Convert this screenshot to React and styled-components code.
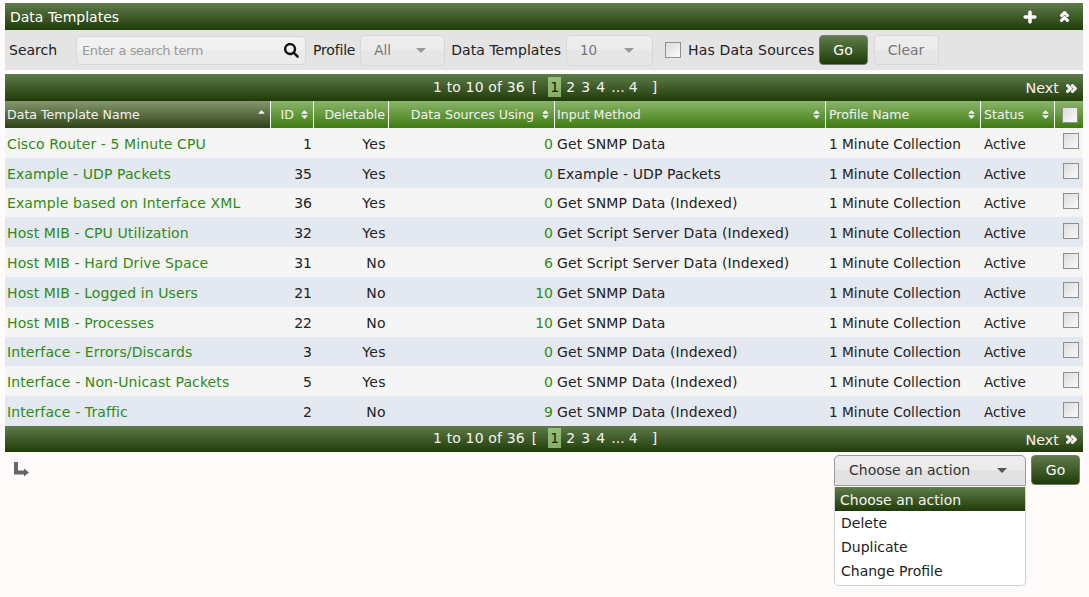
import React from 'react'
import styled, { createGlobalStyle } from 'styled-components'
import { FaPlus, FaAngleDoubleUp, FaAngleDoubleRight, FaSearch, FaSort, FaSortUp } from 'react-icons/fa'

const GlobalStyle = createGlobalStyle`
  html, body { margin: 0; padding: 0; background: #fffbfa; }
  body { font-family: "DejaVu Sans", Verdana, sans-serif; font-size: 13px; color: #222; }
  * { box-sizing: border-box; }
`

const barGradient = 'linear-gradient(to bottom, #5f7b4b 0%, #1f3c08 100%)'
const COLUMNS = '266px 43px 75px 166px 271px 155px 74px 28px'

const Page = styled.div`
  width: 1089px;
  height: 597px;
  padding: 3px 6px 0 5px;
  overflow: hidden;
`

const TitleBar = styled.div`
  display: flex;
  align-items: center;
  height: 27px;
  padding: 0 12px 0 5px;
  background: ${barGradient};
  color: #fff;
  font-size: 14px;
`

const Title = styled.div`
  flex: 1;
`

const TitleIcons = styled.div`
  display: flex;
  gap: 21px;
  align-items: center;
  font-size: 14px;
`

const BoldUp = styled(FaAngleDoubleUp)`
  stroke-width: 40px;
  font-size: 13px;
`

const BoldPlus = styled(FaPlus)`
  stroke-width: 30px;
`

const FilterBar = styled.div`
  display: flex;
  align-items: center;
  height: 40px;
  padding-left: 4px;
  background: #e4e4e4;
  font-size: 14px;
  margin-bottom: 4px;
  color: #222;
`

const FilterLabel = styled.span`
  margin-left: ${p => p.$left || 0}px;
  margin-right: ${p => p.$right || 0}px;
  letter-spacing: ${p => p.$spacing || 0}px;
  white-space: nowrap;
`

const SearchBox = styled.div`
  display: flex;
  align-items: center;
  justify-content: space-between;
  width: 230px;
  height: 29px;
  padding: 0 6px 0 5px;
  border: 1px solid #d8d8d8;
  border-radius: 5px;
  background: linear-gradient(to bottom, #f1f1f1 0%, #f1f1f1 50%, #ebebeb 50%, #ebebeb 100%);
  color: #9a9a9a;
  font-size: 13px;
  letter-spacing: -0.45px;
`

const SelectBox = styled.div`
  display: flex;
  align-items: center;
  flex: none;
  width: ${p => p.$width}px;
  height: 31px;
  margin-left: 5px;
  padding-left: 13px;
  border: 1px solid #d8d8d8;
  border-radius: 5px;
  background: linear-gradient(to bottom, #ececec 0%, #ececec 50%, #e6e6e6 50%, #e6e6e6 100%);
  color: #777;
  font-size: 13.5px;
`

const Caret = styled.span`
  width: 0;
  height: 0;
  margin-left: auto;
  margin-right: ${p => p.$right || 18}px;
  border-left: 5px solid transparent;
  border-right: 5px solid transparent;
  border-top: 5px solid ${p => p.$color || '#999'};
`

const Check = styled.span`
  display: block;
  flex: none;
  width: 16px;
  height: 16px;
  margin-left: ${p => p.$left || 0}px;
  border: 1px solid #8f8f8f;
  background: linear-gradient(135deg, #dcdcdc 0%, #fafafa 100%);
`

const GoButton = styled.div`
  display: flex;
  align-items: center;
  justify-content: center;
  flex: none;
  width: ${p => p.$width || 49}px;
  height: 30px;
  margin-left: ${p => p.$left || 0}px;
  border: 1px solid #777;
  border-radius: 4px;
  background: ${barGradient};
  color: #fff;
  font-size: 14px;
`

const ClearButton = styled.div`
  display: flex;
  align-items: center;
  justify-content: center;
  flex: none;
  width: 65px;
  height: 30px;
  margin-left: 6px;
  border: 1px solid #d8d8d8;
  border-radius: 4px;
  background: linear-gradient(to bottom, #ececec 0%, #ececec 50%, #e6e6e6 50%, #e6e6e6 100%);
  color: #777;
  font-size: 14px;
`

const NavBar = styled.div`
  position: relative;
  display: flex;
  align-items: center;
  height: ${p => p.$height}px;
  padding: 0 0 2px 428px;
  background: ${barGradient};
  color: #f4f4f4;
  font-size: 14px;
`

const NavInfo = styled.div`
  display: flex;
  align-items: center;
  white-space: pre;
`

const NavCount = styled.span`
  letter-spacing: 0.15px;
  margin-right: 7px;
`

const NavBracket = styled.span`
  margin-left: ${p => p.$left || 0}px;
  margin-right: ${p => p.$right || 0}px;
`

const PageNum = styled.span`
  display: inline-block;
  width: ${p => (p.$active ? 13 : 9)}px;
  height: 20px;
  margin-right: ${p => (p.$active ? 5 : 6)}px;
  line-height: 20px;
  text-align: center;
  background: ${p => (p.$active ? 'linear-gradient(to bottom, #96c07a, #85ad68)' : 'none')};
  color: ${p => (p.$active ? '#14240a' : '#f4f4f4')};
`

const NextLink = styled.span`
  position: absolute;
  right: 5px;
  bottom: ${p => p.$bottom}px;
  display: flex;
  align-items: center;
  gap: 6px;
  font-size: 14.4px;
`

const BoldRight = styled(FaAngleDoubleRight)`
  stroke-width: 40px;
  font-size: 13px;
`

const GridRow = styled.div`
  display: grid;
  grid-template-columns: ${COLUMNS};
  align-items: center;
  height: ${p => p.$height}px;
`

const HeadCell = styled.div`
  position: relative;
  display: flex;
  align-items: center;
  justify-content: ${p => (p.$pad !== undefined ? 'flex-end' : 'flex-start')};
  height: 27px;
  padding: 0 ${p => (p.$pad !== undefined ? p.$pad : 2)}px 0 ${p => p.$leftPad || 2}px;
  border-right: 1px solid #f5f5f5;
  background: ${p => (p.$sorted
    ? 'linear-gradient(to bottom, #85996e 0%, #2f4117 100%)'
    : 'linear-gradient(to bottom, #8ab56a 0%, #3f7b12 100%)')};
  color: #f2f2f2;
  font-size: 12.6px;
  white-space: nowrap;
  &:last-child { border-right: 0; padding: 0 0 0 7px; }
`

const SortMark = styled.span`
  position: absolute;
  right: 3px;
  top: 8px;
  display: flex;
  font-size: 11px;
  color: #f2f2f2;
`

const BodyRow = styled(GridRow)`
  background: ${p => (p.$odd ? '#e4e8f1' : '#f5f5f5')};
`

const Cell = styled.div`
  padding: 1.9px ${p => (p.$right ? p.$pad || 2 : 0)}px 0 ${p => p.$left || 2}px;
  text-align: ${p => (p.$right ? 'right' : 'left')};
  color: ${p => p.$color || '#222'};
  font-size: ${p => p.$size || 14}px;
  letter-spacing: ${p => p.$spacing || 0}px;
  white-space: nowrap;
`

const CheckCell = styled.div`
  display: flex;
  padding-left: 8px;
  margin-top: -3px;
`

const ActionArea = styled.div`
  position: relative;
  display: flex;
  align-items: flex-start;
  padding: 3px 3px 0 9px;
`

const ReturnArrow = styled.svg`
  margin-top: 7px;
  margin-right: auto;
`

const ActionSelect = styled.div`
  display: flex;
  align-items: center;
  width: 192px;
  height: 31px;
  padding-left: 14px;
  border: 1px solid #9b9b9b;
  border-radius: 5px 5px 0 0;
  background: linear-gradient(to bottom, #ececec 0%, #ececec 50%, #e2e2e2 50%, #e2e2e2 100%);
  color: #333;
  font-size: 14px;
`

const ActionMenu = styled.div`
  position: absolute;
  top: 35px;
  right: 57px;
  width: 192px;
  padding: 0 0 2px;
  border: 1px solid #d0d0d0;
  border-top: 0;
  border-radius: 0 0 5px 5px;
  background: #fff;
  color: #222;
  font-size: 14px;
`

const MenuItem = styled.div`
  height: 24px;
  line-height: 24px;
  padding-left: 6px;
  white-space: nowrap;
  ${p => p.$active && `
    padding-left: 5px;
    padding-top: 1px;
    background: ${barGradient};
    color: #f4f4f4;
  `}
`

const columns = [
  { label: 'Data Template Name', sorted: true },
  { label: 'ID', pad: 19 },
  { label: 'Deletable', pad: 3, plain: true },
  { label: 'Data Sources Using', pad: 20 },
  { label: 'Input Method' },
  { label: 'Profile Name', leftPad: 3 },
  { label: 'Status', leftPad: 3 },
]

const rows = [
  ['Cisco Router - 5 Minute CPU', 1, 'Yes', 0, 'Get SNMP Data'],
  ['Example - UDP Packets', 35, 'Yes', 0, 'Example - UDP Packets'],
  ['Example based on Interface XML', 36, 'Yes', 0, 'Get SNMP Data (Indexed)'],
  ['Host MIB - CPU Utilization', 32, 'Yes', 0, 'Get Script Server Data (Indexed)'],
  ['Host MIB - Hard Drive Space', 31, 'No', 6, 'Get Script Server Data (Indexed)'],
  ['Host MIB - Logged in Users', 21, 'No', 10, 'Get SNMP Data'],
  ['Host MIB - Processes', 22, 'No', 10, 'Get SNMP Data'],
  ['Interface - Errors/Discards', 3, 'Yes', 0, 'Get SNMP Data (Indexed)'],
  ['Interface - Non-Unicast Packets', 5, 'Yes', 0, 'Get SNMP Data (Indexed)'],
  ['Interface - Traffic', 2, 'No', 9, 'Get SNMP Data (Indexed)'],
]

const Nav = ({ height, nextBottom }) => (
  <NavBar $height={height}>
    <NavInfo>
      <NavCount>1 to 10 of 36</NavCount>
      <NavBracket $right={11}>[</NavBracket>
      <PageNum $active>1</PageNum>
      <PageNum>2</PageNum>
      <PageNum>3</PageNum>
      <PageNum>4</PageNum>
      <NavBracket $right={4}>...</NavBracket>
      <PageNum>4</PageNum>
      <NavBracket $left={8}>]</NavBracket>
    </NavInfo>
    <NextLink $bottom={nextBottom}>Next <BoldRight /></NextLink>
  </NavBar>
)

const App = () => (
  <Page>
    <GlobalStyle />
    <TitleBar>
      <Title>Data Templates</Title>
      <TitleIcons><BoldPlus /><BoldUp /></TitleIcons>
    </TitleBar>
    <FilterBar>
      <FilterLabel $right={19}>Search</FilterLabel>
      <SearchBox>Enter a search term <FaSearch color="#111" size={15} /></SearchBox>
      <FilterLabel $left={7} $spacing={-0.2}>Profile</FilterLabel>
      <SelectBox $width={85}>All<Caret /></SelectBox>
      <FilterLabel $left={6} $spacing={0.05}>Data Templates</FilterLabel>
      <SelectBox $width={87}>10<Caret /></SelectBox>
      <Check $left={12} />
      <FilterLabel $left={7} $right={4} $spacing={0.15}>Has Data Sources</FilterLabel>
      <GoButton>Go</GoButton>
      <ClearButton>Clear</ClearButton>
    </FilterBar>
    <Nav height={27} nextBottom={5} />
    <GridRow $height={27}>
      {columns.map(c => (
        <HeadCell key={c.label} $sorted={c.sorted} $pad={c.pad} $leftPad={c.leftPad}>
          {c.label}
          {!c.plain && <SortMark>{c.sorted ? <FaSortUp /> : <FaSort />}</SortMark>}
        </HeadCell>
      ))}
      <HeadCell><Check /></HeadCell>
    </GridRow>
    {rows.map((r, i) => (
      <BodyRow key={r[0]} $height={29.8} $odd={i % 2 === 1}>
        <Cell $color="#2e8b14" $spacing={0.1}>{r[0]}</Cell>
        <Cell $right>{r[1]}</Cell>
        <Cell $right $pad={3} $spacing={0.4}>{r[2]}</Cell>
        <Cell $right $color="#2e8b14">{r[3]}</Cell>
        <Cell $spacing={0.1}>{r[4]}</Cell>
        <Cell $left={3} $size={13.7}>1 Minute Collection</Cell>
        <Cell $left={3} $size={13.5}>Active</Cell>
        <CheckCell><Check /></CheckCell>
      </BodyRow>
    ))}
    <Nav height={26} nextBottom={4} />
    <ActionArea>
      <ReturnArrow width="15" height="15" viewBox="0 0 15 15">
        <path d="M2 0 V10.5 H11" fill="none" stroke="#666" strokeWidth="4" />
        <path d="M10 6.5 L15 10.5 L10 14.5 Z" fill="#666" />
      </ReturnArrow>
      <ActionSelect>Choose an action<Caret $right={18} $color="#555" /></ActionSelect>
      <GoButton $left={5}>Go</GoButton>
      <ActionMenu>
        <MenuItem $active>Choose an action</MenuItem>
        <MenuItem>Delete</MenuItem>
        <MenuItem>Duplicate</MenuItem>
        <MenuItem>Change Profile</MenuItem>
      </ActionMenu>
    </ActionArea>
  </Page>
)

export default App
